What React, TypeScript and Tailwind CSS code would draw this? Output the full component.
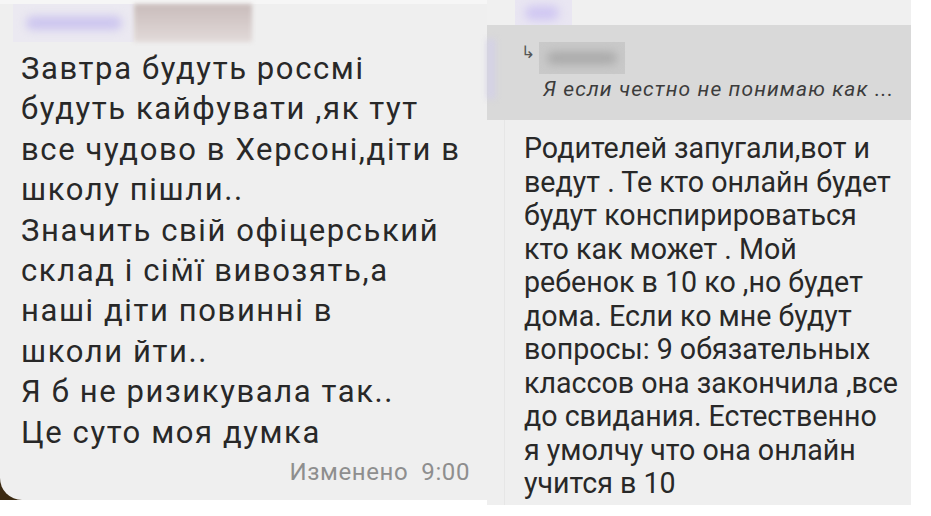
const LEFT_LINES = [
  'Завтра будуть россмі',
  'будуть кайфувати ,як тут',
  'все чудово в Херсоні,діти в',
  'школу пішли..',
  'Значить свій офіцерський',
  'склад і сім\u0308ї вивозять,а',
  'наші діти повинні в',
  'школи йти..',
  'Я б не ризикувала так..',
  'Це суто моя думка',
];

const RIGHT_LINES = [
  'Родителей запугали,вот и',
  'ведут . Те кто онлайн будет',
  'будут конспирироваться',
  'кто как может . Мой',
  'ребенок в 10 ко ,но будет',
  'дома. Если ко мне будут',
  'вопросы: 9 обязательных',
  'классов она закончила ,все',
  'до свидания. Естественно',
  'я умолчу что она онлайн',
  'учится в 10',
];

function LeftMessage() {
  return (
    <div className="h-[500px] w-[487px] shrink-0 bg-[#3b2a12]">
      <div className="flex h-full flex-col rounded-bl-[22px] bg-[#efefef]">
        <div className="h-[4px] bg-[#f6f6f6]" />
        {/* blurred sender name */}
        <div className="ml-[13px] flex h-[38px] w-[239px]">
          <div className="flex w-[121px] items-center justify-center bg-[#ebe9f1]">
            <div className="h-[14px] w-[96px] rounded-full bg-[#cdc6ef] blur-[4px]" />
          </div>
          <div className="w-[118px] bg-gradient-to-b from-[#c9bcbb] to-[#e2dad9] blur-[2px]" />
        </div>
        <div className="mt-[7px] pl-[21px] text-[31px] leading-[40.4px] tracking-[1.6px] text-[#282828]">
          {LEFT_LINES.map((l, i) => (
            <div key={i} className="whitespace-nowrap">{l}</div>
          ))}
        </div>
        <div className="mt-[6px] pr-[17px] text-right text-[24px] leading-[26px] tracking-[0.6px] text-[#8e8e8e]">
          Изменено&nbsp; 9:00
        </div>
      </div>
    </div>
  );
}

function RightMessage() {
  return (
    <div className="flex h-[505px] w-[424px] shrink-0 flex-col bg-[#efefef]">
      <div className="flex h-[25px] bg-[#f0f0f0]">
        <div className="ml-[28px] h-[28px] w-[57px] bg-[#e9e6f2]">
          <div className="ml-[10px] mt-[6px] h-[14px] w-[34px] rounded-full bg-[#cfc6f2] blur-[5px]" />
        </div>
      </div>
      {/* reply quote */}
      <div className="relative h-[95px] bg-[#d9d9d9] pl-[56px] pt-[17px]">
        <div className="absolute left-0 top-[14px] h-[60px] w-[8px] bg-[#d3d0e6] blur-[3px]" />
        <div className="flex items-start">
          <span className="-ml-[22px] mr-[4px] mt-[2px] text-[17px] leading-[16px] text-[#555]">↳</span>
          <div className="h-[32px] w-[86px] bg-[#c9c9c9]">
            <div className="ml-[8px] mt-[10px] h-[12px] w-[70px] rounded-full bg-[#a9a9a9] blur-[5px]" />
          </div>
        </div>
        <div className="mt-[2px] whitespace-nowrap text-[21px] italic leading-[26px] tracking-[1.1px] text-[#3c3c3c]">
          Я если честно не понимаю как ...
        </div>
      </div>
      <div className="ml-[17px] flex-1 border-l border-[#e6e6e6] pl-[19px] pt-[12px] text-[28.6px] leading-[33.5px] text-[#282828]">
        {RIGHT_LINES.map((l, i) => (
          <div key={i} className="whitespace-nowrap">{l}</div>
        ))}
      </div>
    </div>
  );
}

export default function App() {
  return (
    <div
      className="flex h-[516px] w-[931px] items-start bg-white"
      style={{ fontFamily: 'Roboto, "Noto Sans", sans-serif' }}
    >
      <LeftMessage />
      <RightMessage />
    </div>
  );
}
